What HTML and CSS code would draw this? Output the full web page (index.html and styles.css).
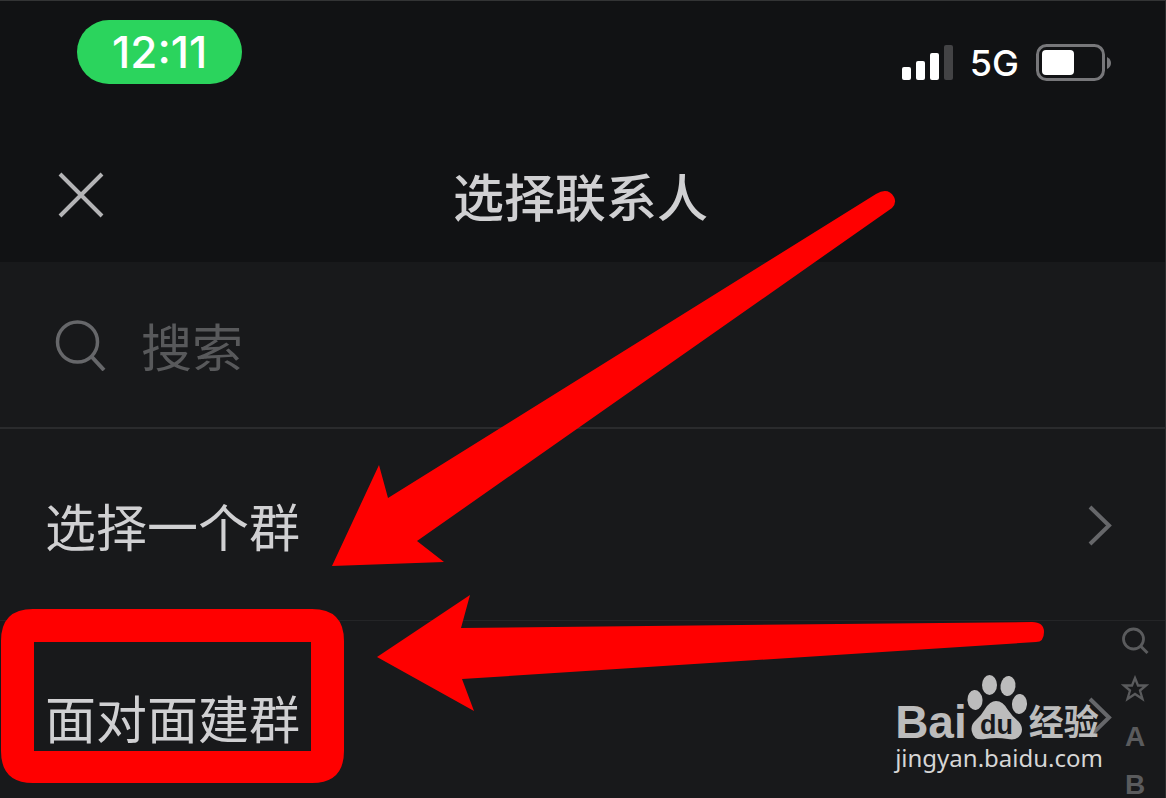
FILE: index.html
```html
<!DOCTYPE html>
<html lang="zh-CN">

<head>
  <meta charset="UTF-8">
  <meta name="viewport" content="width=device-width, initial-scale=1.0">
  <title>选择联系人</title>
  <link rel="stylesheet" href="styles.css">
</head>

<body>
  <header>
    <div class="status-bar">
      <span class="time">12:11</span>
      <div class="status-icons">
        <svg class="signal" width="51" height="36" viewBox="0 0 51 36">
          <rect x="0" y="22" width="9" height="13" rx="2" fill="#fff" />
          <rect x="14" y="16" width="9" height="19" rx="2" fill="#fff" />
          <rect x="28" y="8" width="9" height="27" rx="2" fill="#fff" />
          <rect x="42" y="0" width="9" height="35" rx="2" fill="#434345" />
        </svg>
        <span class="network">5G</span>
        <svg class="battery" width="76" height="38" viewBox="0 0 76 38">
          <rect x="1.5" y="1.5" width="66" height="34" rx="9" fill="none" stroke="#77777a" stroke-width="3" />
          <rect x="6" y="6" width="32" height="25" rx="4" fill="#fff" />
          <path d="M71 13 Q75 15 75 19 Q75 23 71 25 Z" fill="#77777a" />
        </svg>
      </div>
    </div>

    <div class="nav-bar">
      <button type="button" class="close" aria-label="关闭">
        <svg width="46" height="46" viewBox="0 0 46 46">
          <path d="M2 2 L44 44 M44 2 L2 44" stroke="#b4b4b6" stroke-width="4" />
        </svg>
      </button>
      <h1>选择联系人</h1>
    </div>
  </header>

  <form class="search">
    <label for="keyword" aria-label="搜索">
      <svg width="52" height="52" viewBox="0 0 52 52">
        <circle cx="22.500" cy="23" r="20" fill="none" stroke="#66676a" stroke-width="3.5" />
        <path d="M36 37 L49 51" stroke="#66676a" stroke-width="4" />
      </svg>
    </label>
    <input type="text" id="keyword" placeholder="搜索">
  </form>

  <main>
    <a class="row" href="#group">
      <span>选择一个群</span>
      <svg width="24" height="42" viewBox="0 0 24 42">
        <path d="M2 3 L21 21.5 L2 40" fill="none" stroke="#66676a" stroke-width="4" />
      </svg>
    </a>
    <a class="row" href="#nearby">
      <span>面对面建群</span>
      <svg width="24" height="42" viewBox="0 0 24 42">
        <path d="M2 3 L21 21.5 L2 40" fill="none" stroke="#66676a" stroke-width="4" />
      </svg>
    </a>
  </main>

  <nav class="index">
    <a href="#search" aria-label="搜索">
      <svg width="28" height="28" viewBox="0 0 28 28">
        <circle cx="12.500" cy="12" r="10" fill="none" stroke="#5a5b5d" stroke-width="2.8" />
        <path d="M19.500 19 L26.500 26" stroke="#5a5b5d" stroke-width="3" />
      </svg>
    </a>
    <a href="#star" aria-label="星标">
      <svg width="28" height="28" viewBox="0 0 28 28">
        <path d="M14 3 L17 10.500 L25 10.500 L19 15.500 L21.500 24 L14 19 L6.500 24 L9 15.500 L3 10.500 L11 10.500 Z" fill="none" stroke="#5a5b5d" stroke-width="2.3" />
      </svg>
    </a>
    <a href="#A">A</a>
    <a href="#B">B</a>
  </nav>

  <div class="watermark">
    <div class="logo">
      <span class="bai">Bai</span>
      <svg width="62" height="68" viewBox="1 0 62 68">
        <g fill="#bcbcbc">
          <ellipse cx="9" cy="26" rx="7.500" ry="10" transform="rotate(-5 9 26)" />
          <ellipse cx="23.500" cy="11" rx="7.500" ry="10" />
          <ellipse cx="42" cy="12" rx="7.500" ry="10" transform="rotate(8 42 12)" />
          <ellipse cx="53.500" cy="30" rx="7.500" ry="10" transform="rotate(5 53.500 30)" />
          <path d="M30 27 Q37 27 42 36 Q46 42 52 47 Q58 53 55 60 Q51 67 42 65 Q30 63 19 65 Q8 67 6 58 Q4 51 10 46 Q15 42 19 35 Q24 27 30 27 Z" />
        </g>
        <text class="du" x="14" y="60">du</text>
      </svg>
      <span class="jingyan">经验</span>
    </div>
    <div class="site">jingyan.baidu.com</div>
  </div>

  <!-- red frame and arrows pointing at the two menu items -->
  <svg class="marks" width="1166" height="798" viewBox="0 0 1166 798" fill="#ff0000">
    <path d="M332 566 L379 465 L388 498 L876 194 Q888 187 894 197 Q897 203 892 208 L417 541 L444 562 Z" />
    <path d="M377 657 L470 595 L461 628 L1032 622 Q1044 622 1044 632 Q1044 642 1036 642 L462 679 L474 711 Z" />
    <path fill-rule="evenodd" d="M33 609 H312 Q344 609 344 641 V751 Q344 783 312 783 H33 Q1 783 1 751 V641 Q1 609 33 609 Z M34 642 V751 H311 V642 Z" />
  </svg>
</body>

</html>
```

FILE: styles.css
```css
* {
  box-sizing: border-box;
}

body {
  margin: 0;
  height: 100vh;
  overflow: hidden;
  position: relative;
  background-color: #18191b;
  color: #d0d0d2;
  font-family: "Noto Sans CJK SC", sans-serif;
  border-top: 1px solid #333435;
  border-right: 1px solid #2c2d2e;
}

svg {
  display: block;
}

a {
  color: inherit;
  text-decoration: none;
}

header {
  background-color: #111214;
}

.status-bar {
  height: 128px;
  padding: 19px 53px 0 77px;
  display: flex;
  justify-content: space-between;
  align-items: flex-start;
  font-family: Inter, sans-serif;
  color: #fff;
}

.time {
  padding: 0 35px;
  border-radius: 32px;
  background-color: #2bd45d;
  font-size: 44px;
  font-weight: 500;
  line-height: 64px;
}

.status-icons {
  display: flex;
  align-items: center;
  gap: 17px;
  padding-top: 24px;
}

.network {
  font-size: 36px;
  font-weight: 500;
  line-height: 38px;
}

.nav-bar {
  height: 133px;
  padding: 0 62px 2px 58px;
  display: grid;
  grid-template-columns: 46px 1fr 46px;
  align-items: center;
}

.close {
  padding: 0;
  border: none;
  background: none;
  cursor: pointer;
}

h1 {
  margin: 0;
  font-size: 51px;
  font-weight: 500;
  line-height: 64px;
  text-align: center;
}

.search {
  height: 167px;
  padding: 0 55px;
  display: flex;
  align-items: center;
  gap: 34px;
  border-bottom: 2px solid #2a2b2d;
}

.search input {
  flex: 1;
  min-width: 0;
  padding: 0;
  border: none;
  outline: none;
  background: none;
  color: inherit;
  font-family: inherit;
  font-size: 51px;
  line-height: 64px;
}

.search input::placeholder {
  color: #58595b;
  opacity: 1;
}

.row {
  height: 192px;
  padding: 0 53px 0 45px;
  display: flex;
  justify-content: space-between;
  align-items: center;
  border-bottom: 1px solid #242527;
  font-size: 51px;
  line-height: 64px;
}

/* letter index on the right edge */
.index {
  position: absolute;
  top: 616px;
  right: 15px;
  display: flex;
  flex-direction: column;
  color: #5a5b5d;
  font-family: "Liberation Sans", sans-serif;
  font-size: 28px;
  font-weight: bold;
  line-height: 28px;
}

.index a {
  width: 30px;
  height: 48px;
  display: flex;
  align-items: center;
  justify-content: center;
}

.watermark {
  position: absolute;
  top: 673px;
  right: 62px;
}

.logo {
  display: flex;
  align-items: flex-end;
  color: #bcbcbc;
  font-weight: bold;
}

.bai {
  font-family: "Liberation Sans", sans-serif;
  font-size: 46px;
  line-height: 40px;
}

.du {
  fill: #18191b;
  font-family: "Liberation Sans", sans-serif;
  font-size: 27px;
}

.jingyan {
  font-size: 35px;
  line-height: 36px;
  padding-bottom: 4px;
}

.site {
  color: #d6d6d6;
  font-family: "Noto Sans", sans-serif;
  font-size: 24px;
  line-height: 32px;
}

.marks {
  position: absolute;
  top: -1px;
  left: 0;
  pointer-events: none;
}
```
